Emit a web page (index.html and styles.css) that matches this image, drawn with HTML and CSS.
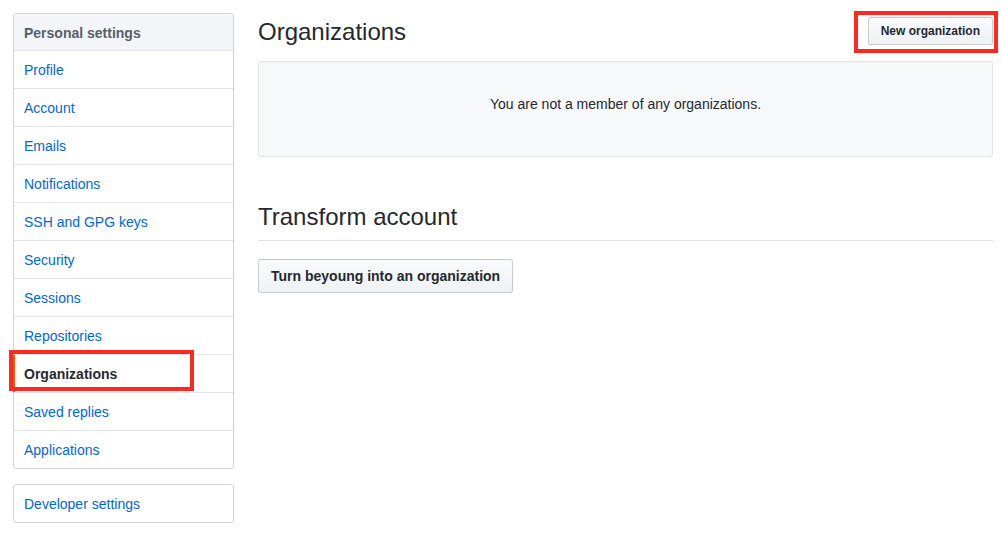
FILE: index.html
```html
<!DOCTYPE html>
<html>
<head>
<meta charset="utf-8">
<link rel="stylesheet" href="styles.css">
</head>
<body>
<div class="page">
  <aside class="sidebar">
    <nav class="menu">
      <div class="menu-heading">Personal settings</div>
      <a class="menu-item">Profile</a>
      <a class="menu-item">Account</a>
      <a class="menu-item">Emails</a>
      <a class="menu-item">Notifications</a>
      <a class="menu-item">SSH and GPG keys</a>
      <a class="menu-item">Security</a>
      <a class="menu-item">Sessions</a>
      <a class="menu-item">Repositories</a>
      <a class="menu-item selected">Organizations<span class="mark mark-org"></span></a>
      <a class="menu-item">Saved replies</a>
      <a class="menu-item">Applications</a>
    </nav>
    <nav class="menu">
      <a class="menu-item">Developer settings</a>
    </nav>
  </aside>
  <main class="main">
    <div class="subhead">
      <h2 class="title">Organizations</h2>
      <button class="btn btn-sm">New organization<span class="mark mark-btn"></span></button>
    </div>
    <div class="blankslate">You are not a member of any organizations.</div>
    <div class="subhead spacious">
      <h2 class="title">Transform account</h2>
    </div>
    <button class="btn btn-lg">Turn beyoung into an organization</button>
  </main>
</div>
</body>
</html>
```
FILE: styles.css
```css
* { box-sizing: border-box; }
html, body { margin: 0; padding: 0; background: #fff; }
body {
  font-family: "Liberation Sans", Arial, sans-serif;
  font-size: 14px;
  color: #24292e;
}
.page {
  display: flex;
  gap: 24px;
  padding: 13px 8px 0 13px;
}
.sidebar {
  width: 221px;
  flex: none;
  display: flex;
  flex-direction: column;
  gap: 15px;
}
.menu {
  border: 1px solid #d1d5da;
  border-radius: 3px;
  background: #fff;
}
.menu-heading {
  height: 37px;
  padding: 9px 10px 8px;
  line-height: 20px;
  font-weight: bold;
  color: #586069;
  background: #f3f5f8;
  border-bottom: 1px solid #e1e4e8;
  border-radius: 3px 3px 0 0;
}
.menu-item {
  position: relative;
  display: block;
  height: 38px;
  padding: 9px 10px 8px;
  line-height: 20px;
  color: #0366d6;
  border-bottom: 1px solid #e1e4e8;
  text-decoration: none;
}
.menu-item:last-child { border-bottom: none; height: 37px; }
.menu-item.selected {
  color: #24292e;
  font-weight: bold;
}
.menu-item.selected::before {
  content: "";
  position: absolute;
  left: -1px;
  top: 0;
  bottom: 0;
  width: 2px;
  background: #e36209;
}
.mark {
  position: absolute;
  border: 4px solid #ff2a1f;
  pointer-events: none;
}
.mark-org {
  left: -5px;
  top: -5px;
  width: 185px;
  height: 41px;
}
.mark-btn {
  left: -15px;
  top: -7px;
  width: 144px;
  height: 42px;
}
.main {
  flex: 1;
  min-width: 0;
}
.subhead {
  display: flex;
  justify-content: space-between;
  align-items: flex-start;
}
.title {
  margin: 0;
  font-size: 24px;
  font-weight: normal;
  line-height: 38px;
  color: #24292e;
}
.btn {
  position: relative;
  font-family: inherit;
  font-weight: bold;
  color: #24292e;
  background: linear-gradient(#fafbfc, #eff3f6 90%);
  border: 1px solid rgba(27,31,35,0.2);
  border-radius: 3px;
  cursor: pointer;
}
.btn-sm {
  margin-top: 4px;
  height: 28px;
  padding: 3px 12px;
  font-size: 12px;
  line-height: 20px;
}
.btn-lg {
  margin-top: 18px;
  height: 34px;
  padding: 6px 12px;
  font-size: 14px;
  line-height: 20px;
}
.blankslate {
  margin-top: 10px;
  height: 96px;
  padding: 32px 20px;
  line-height: 20px;
  text-align: center;
  background: #f6f8fa;
  border: 1px solid #e1e4e8;
  border-radius: 3px;
}
.spacious {
  margin-top: 42px;
  padding-bottom: 5px;
  border-bottom: 1px solid #e1e4e8;
}
.spacious .title { line-height: 36px; }
```
